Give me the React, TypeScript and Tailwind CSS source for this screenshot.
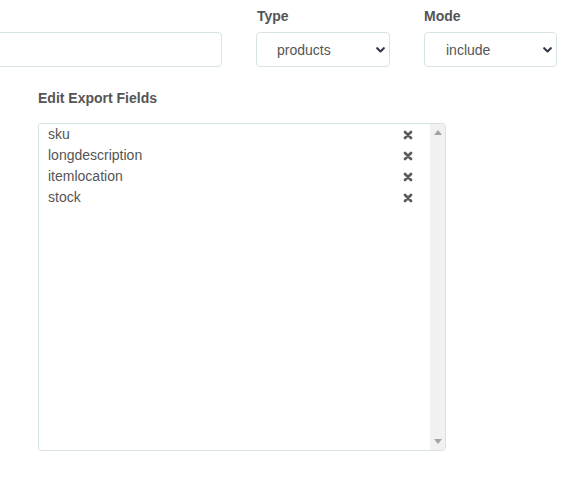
import React from "react";

const Chevron = () => (
  <svg width="9" height="6" viewBox="0 0 9 6" className="pointer-events-none absolute right-[5px] top-1/2 -translate-y-1/2">
    <path d="M1.2 1.2 L4.5 4.5 L7.8 1.2" fill="none" stroke="#333a44" strokeWidth="2.1" strokeLinecap="round" strokeLinejoin="round" />
  </svg>
);

const XIcon = () => (
  <svg width="10" height="10" viewBox="0 0 10 10">
    <path d="M2 2 L8 8 M8 2 L2 8" stroke="#5c5c5c" strokeWidth="2.8" strokeLinecap="round" />
  </svg>
);

const fields = ["sku", "longdescription", "itemlocation", "stock"];

export default function App() {
  return (
    <div className="w-[575px] h-[479px] bg-white overflow-hidden text-[#555]" style={{ fontFamily: '"Liberation Sans", Arial, sans-serif' }}>
      <div className="flex gap-[34px] pt-[8px]">
        <div className="-ml-[10px] w-[232px] flex flex-col">
          <div className="h-[16px] mb-[8px]" />
          <input className="h-[35px] w-full rounded-[4px] border border-[#d8e4e4] bg-white outline-none" />
        </div>
        <div className="w-[134px] flex flex-col">
          <label className="h-[16px] leading-[16px] mb-[8px] text-[14px] font-bold pl-[1px]">Type</label>
          <div className="relative">
            <select className="appearance-none h-[35px] w-full rounded-[4px] border border-[#d8e4e4] bg-white pl-[20px] pt-[2px] text-[14px] text-[#555] outline-none">
              <option>products</option>
            </select>
            <Chevron />
          </div>
        </div>
        <div className="w-[133px] flex flex-col">
          <label className="h-[16px] leading-[16px] mb-[8px] text-[14px] font-bold">Mode</label>
          <div className="relative">
            <select className="appearance-none h-[35px] w-full rounded-[4px] border border-[#d8e4e4] bg-white pl-[21px] pt-[2px] text-[14px] text-[#555] outline-none">
              <option>include</option>
            </select>
            <Chevron />
          </div>
        </div>
      </div>
      <div className="ml-[38px] mt-[23px]">
        <div className="h-[16px] leading-[16px] text-[14px] font-bold">Edit Export Fields</div>
        <div className="mt-[17px] w-[408px] h-[328px] rounded-[3px] border border-[#d8e4e4] flex overflow-hidden">
          <div className="flex-1">
            {fields.map((f) => (
              <div key={f} className="h-[21px] flex items-center justify-between pl-[9px] pr-[17px] text-[14px]">
                <span>{f}</span>
                <XIcon />
              </div>
            ))}
          </div>
          <div className="w-[15px] bg-[#f1f1f1] flex flex-col justify-between items-center py-[6px]">
            <svg width="8" height="5" viewBox="0 0 8 5"><path d="M0 5 L4 0 L8 5 Z" fill="#a3a3a3" /></svg>
            <svg width="8" height="5" viewBox="0 0 8 5"><path d="M0 0 L4 5 L8 0 Z" fill="#a3a3a3" /></svg>
          </div>
        </div>
      </div>
    </div>
  );
}
